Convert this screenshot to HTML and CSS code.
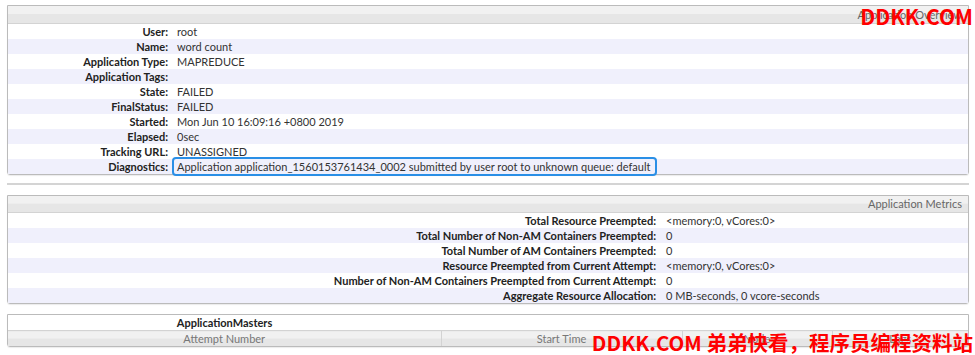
FILE: index.html
```html
<!DOCTYPE html>
<html>
<head>
    <meta charset="UTF-8">
    <title>Application Overview</title>
<link rel="stylesheet" href="styles.css">
</head>
<body>
<div class="page">
    <div class="info_wrap">
        <table class="info overview">
            <thead>
            <tr><th class="head" colspan="2">Application Overview</th></tr>
            </thead>
            <tbody>
            <tr><th>User:</th><td>root</td></tr>
            <tr class="even"><th>Name:</th><td>word count</td></tr>
            <tr><th>Application Type:</th><td>MAPREDUCE</td></tr>
            <tr class="even"><th>Application Tags:</th><td></td></tr>
            <tr><th>State:</th><td>FAILED</td></tr>
            <tr class="even"><th>FinalStatus:</th><td>FAILED</td></tr>
            <tr><th>Started:</th><td>Mon Jun 10 16:09:16 +0800 2019</td></tr>
            <tr class="even"><th>Elapsed:</th><td>0sec</td></tr>
            <tr><th>Tracking URL:</th><td><a href="#">UNASSIGNED</a></td></tr>
            <tr class="even"><th>Diagnostics:</th><td><span class="marked">Application application_1560153761434_0002 submitted by user root to unknown queue: default</span></td></tr>
            </tbody>
        </table>
    </div>
    <hr class="sep">
    <div class="info_wrap">
        <table class="info metrics">
            <thead>
            <tr><th class="head" colspan="2">Application Metrics</th></tr>
            </thead>
            <tbody>
            <tr><th>Total Resource Preempted:</th><td>&lt;memory:0, vCores:0&gt;</td></tr>
            <tr class="even"><th>Total Number of Non-AM Containers Preempted:</th><td>0</td></tr>
            <tr><th>Total Number of AM Containers Preempted:</th><td>0</td></tr>
            <tr class="even"><th>Resource Preempted from Current Attempt:</th><td>&lt;memory:0, vCores:0&gt;</td></tr>
            <tr><th>Number of Non-AM Containers Preempted from Current Attempt:</th><td>0</td></tr>
            <tr class="even"><th>Aggregate Resource Allocation:</th><td>0 MB-seconds, 0 vcore-seconds</td></tr>
            </tbody>
        </table>
    </div>
    <div class="info_wrap gap_top">
        <table class="masters">
            <tr class="caption"><th>ApplicationMasters</th><td colspan="3"></td></tr>
            <tr class="cols">
                <th class="c1">Attempt Number</th>
                <th class="c2">Start Time</th>
                <th class="c3">Node</th>
                <th class="c4">Logs</th>
            </tr>
        </table>
    </div>
</div>
<div class="mark_top">DDKK.COM</div>
<div class="mark_bottom">DDKK.COM 弟弟快看，程序员编程资料站</div>
</body>
</html>
```

FILE: styles.css
```css
html, body {
    margin: 0;
    padding: 0;
}
body {
    font-family: Lato, 'Noto Sans', sans-serif;
    font-size: 11px;
    color: #333;
    background: #FFF;
    position: relative;
    height: 355px;
    overflow: hidden;
}
.page {
    padding: 5px 6px 0 7px;
}
.info_wrap {
    border: 1px solid #BBB;
    border-radius: 0 0 3px 3px;
    box-shadow: 0 1px 1px rgba(0,0,0,0.08);
}
.gap_top {
    margin-top: 10px;
}
table {
    width: 100%;
    border-collapse: collapse;
}
th, td {
    padding: 0 4px;
    height: 15px;
    line-height: 15px;
    white-space: nowrap;
}
.info th {
    text-align: right;
    font-weight: bold;
    color: #222;
}
.info td {
    text-align: left;
    padding-left: 5px;
}
.info th.head {
    height: 17px;
    line-height: 17px;
    font-weight: normal;
    color: #666;
    text-align: right;
    padding-right: 6px;
    background: linear-gradient(#F1F1F1 0%, #F1F1F1 45%, #E6E6E6 50%, #E6E6E6 100%);
    border-bottom: 1px solid #D3D3D3;
}
.metrics th.head {
    height: 14px;
    line-height: 16px;
}
.overview th {
    width: 156px;
}
.metrics th {
    width: 644px;
}
.metrics td {
    padding-left: 6px;
}
tr.even {
    background: #F0F0FC;
}
a {
    color: #333;
    text-decoration: underline;
}
.marked {
    display: inline-block;
    height: 15px;
    vertical-align: top;
    margin-left: -3px;
    padding: 0 5px 0 3px;
    border-radius: 2px;
    box-shadow: 0 0 0 2px #2A8FE6;
}
.sep {
    border: none;
    border-top: 2px solid #D4D4D4;
    margin: 8px 0 10px;
}
.masters th {
    height: 15px;
}
.masters .caption th {
    width: 425px;
    font-weight: bold;
    color: #222;
    text-align: center;
}
.masters .cols th {
    font-weight: normal;
    color: #777;
    text-align: center;
    background: linear-gradient(#F1F1F1 0%, #F1F1F1 45%, #E6E6E6 50%, #E6E6E6 100%);
    border-top: 1px solid #D3D3D3;
    border-left: 1px solid #D3D3D3;
}
.masters .cols th.c1 {
    border-left: none;
}
.masters .c2 {
    width: 232px;
}
.masters .c3 {
    width: 141px;
}
.mark_top, .mark_bottom {
    position: absolute;
    color: #F00;
    font-family: 'Noto Sans CJK SC', 'Noto Sans', sans-serif;
    font-weight: bold;
    line-height: 24px;
}
.mark_top {
    font-size: 21px;
    top: 4px;
    right: 2px;
}
.mark_bottom {
    font-size: 20.5px;
    top: 330px;
    right: 2px;
}
```
